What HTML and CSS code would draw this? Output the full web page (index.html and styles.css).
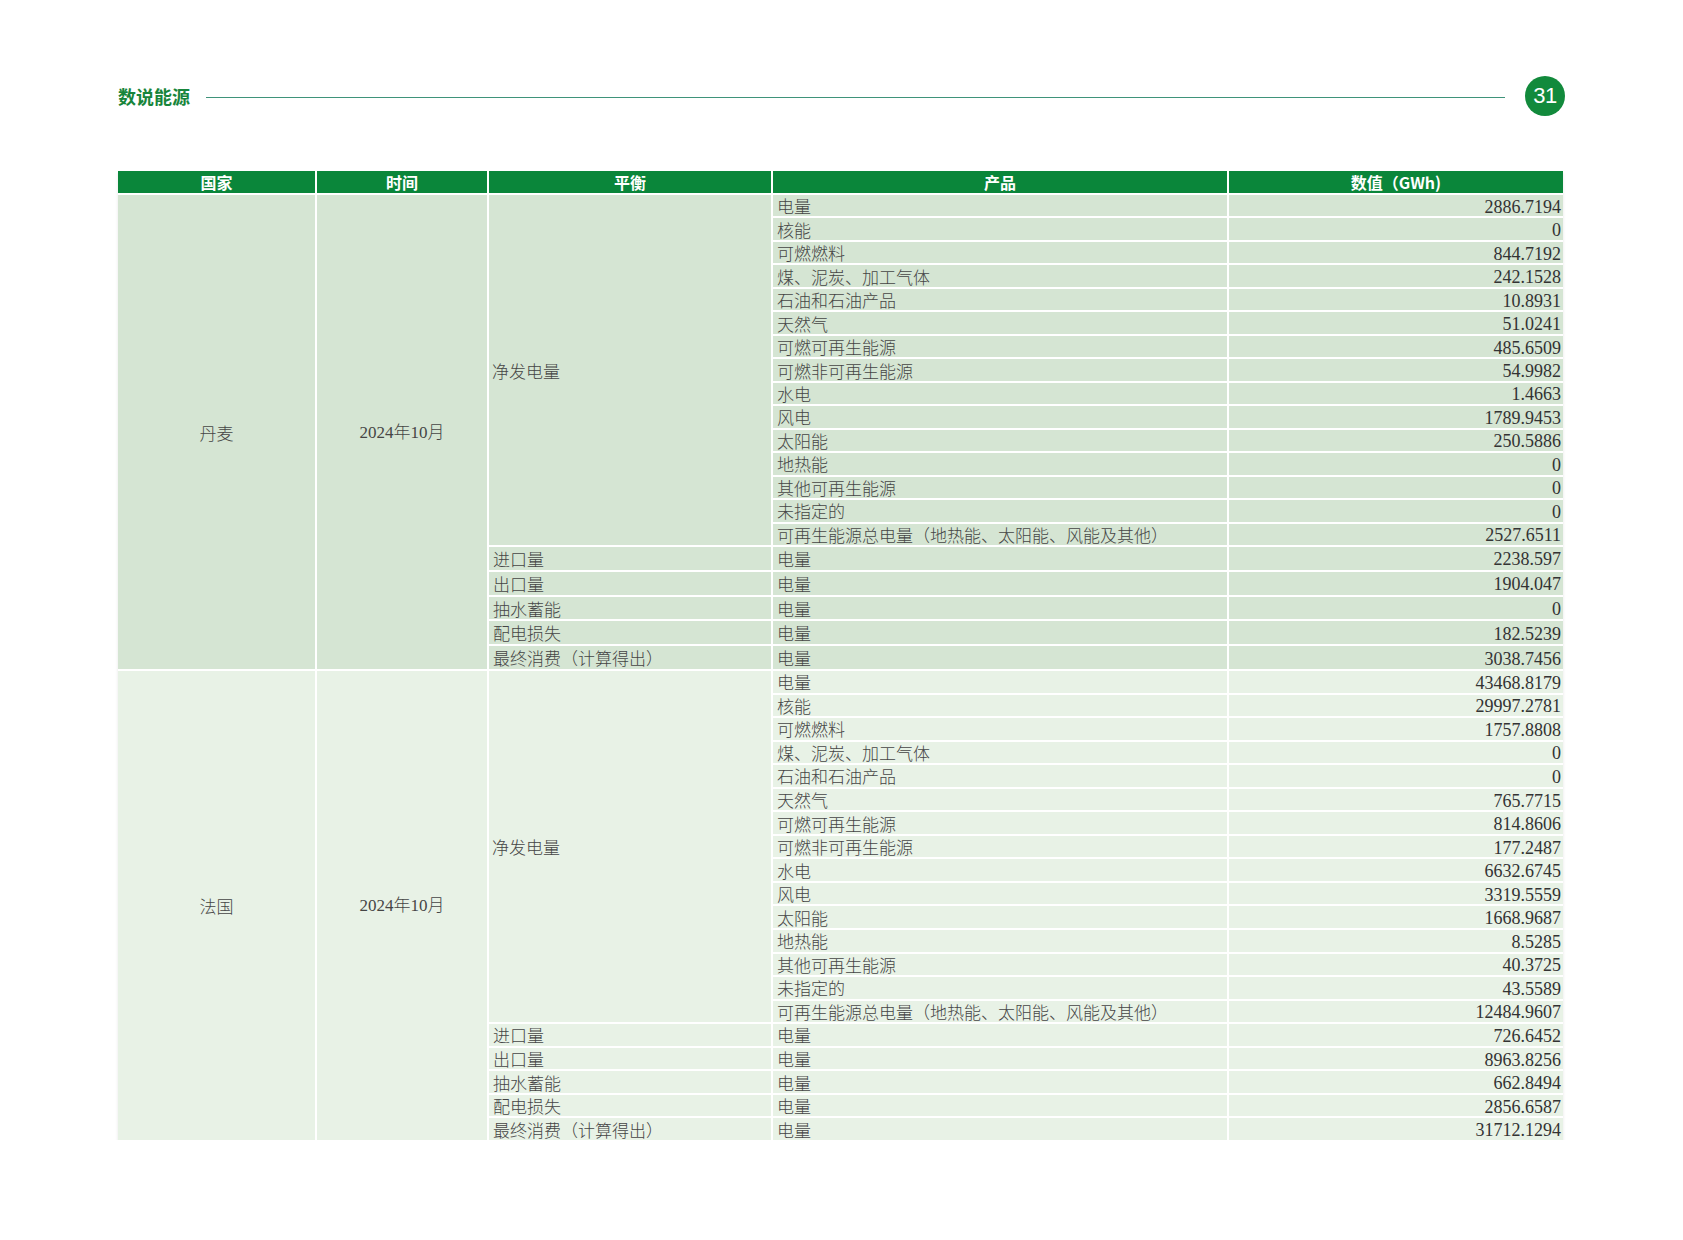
FILE: index.html
```html
<!DOCTYPE html>
<html lang="zh-CN">
<head>
<meta charset="utf-8">
<title>数说能源</title>
<link rel="stylesheet" href="styles.css">
</head>
<body>
<div class="page">
  <div class="top-bar">
    <div class="section-title">数说能源</div>
    <div class="rule"></div>
    <div class="page-num">31</div>
  </div>

  <div class="grid">
    <div class="th">国家</div>
    <div class="th">时间</div>
    <div class="th">平衡</div>
    <div class="th">产品</div>
    <div class="th">数值（GWh)</div>

    <div class="cell dk center span20">丹麦</div>
    <div class="cell dk center span20 num-font">2024年10月</div>
    <div class="cell dk span15">净发电量</div>
    <div class="cell dk">电量</div><div class="cell dk val">2886.7194</div>
    <div class="cell dk">核能</div><div class="cell dk val">0</div>
    <div class="cell dk">可燃燃料</div><div class="cell dk val">844.7192</div>
    <div class="cell dk">煤、泥炭、加工气体</div><div class="cell dk val">242.1528</div>
    <div class="cell dk">石油和石油产品</div><div class="cell dk val">10.8931</div>
    <div class="cell dk">天然气</div><div class="cell dk val">51.0241</div>
    <div class="cell dk">可燃可再生能源</div><div class="cell dk val">485.6509</div>
    <div class="cell dk">可燃非可再生能源</div><div class="cell dk val">54.9982</div>
    <div class="cell dk">水电</div><div class="cell dk val">1.4663</div>
    <div class="cell dk">风电</div><div class="cell dk val">1789.9453</div>
    <div class="cell dk">太阳能</div><div class="cell dk val">250.5886</div>
    <div class="cell dk">地热能</div><div class="cell dk val">0</div>
    <div class="cell dk">其他可再生能源</div><div class="cell dk val">0</div>
    <div class="cell dk">未指定的</div><div class="cell dk val">0</div>
    <div class="cell dk">可再生能源总电量（地热能、太阳能、风能及其他）</div><div class="cell dk val">2527.6511</div>
    <div class="cell dk">进口量</div><div class="cell dk">电量</div><div class="cell dk val">2238.597</div>
    <div class="cell dk">出口量</div><div class="cell dk">电量</div><div class="cell dk val">1904.047</div>
    <div class="cell dk">抽水蓄能</div><div class="cell dk">电量</div><div class="cell dk val">0</div>
    <div class="cell dk">配电损失</div><div class="cell dk">电量</div><div class="cell dk val">182.5239</div>
    <div class="cell dk">最终消费（计算得出）</div><div class="cell dk">电量</div><div class="cell dk val">3038.7456</div>

    <div class="cell fr center span20">法国</div>
    <div class="cell fr center span20 num-font">2024年10月</div>
    <div class="cell fr span15">净发电量</div>
    <div class="cell fr">电量</div><div class="cell fr val">43468.8179</div>
    <div class="cell fr">核能</div><div class="cell fr val">29997.2781</div>
    <div class="cell fr">可燃燃料</div><div class="cell fr val">1757.8808</div>
    <div class="cell fr">煤、泥炭、加工气体</div><div class="cell fr val">0</div>
    <div class="cell fr">石油和石油产品</div><div class="cell fr val">0</div>
    <div class="cell fr">天然气</div><div class="cell fr val">765.7715</div>
    <div class="cell fr">可燃可再生能源</div><div class="cell fr val">814.8606</div>
    <div class="cell fr">可燃非可再生能源</div><div class="cell fr val">177.2487</div>
    <div class="cell fr">水电</div><div class="cell fr val">6632.6745</div>
    <div class="cell fr">风电</div><div class="cell fr val">3319.5559</div>
    <div class="cell fr">太阳能</div><div class="cell fr val">1668.9687</div>
    <div class="cell fr">地热能</div><div class="cell fr val">8.5285</div>
    <div class="cell fr">其他可再生能源</div><div class="cell fr val">40.3725</div>
    <div class="cell fr">未指定的</div><div class="cell fr val">43.5589</div>
    <div class="cell fr">可再生能源总电量（地热能、太阳能、风能及其他）</div><div class="cell fr val">12484.9607</div>
    <div class="cell fr">进口量</div><div class="cell fr">电量</div><div class="cell fr val">726.6452</div>
    <div class="cell fr">出口量</div><div class="cell fr">电量</div><div class="cell fr val">8963.8256</div>
    <div class="cell fr">抽水蓄能</div><div class="cell fr">电量</div><div class="cell fr val">662.8494</div>
    <div class="cell fr">配电损失</div><div class="cell fr">电量</div><div class="cell fr val">2856.6587</div>
    <div class="cell fr">最终消费（计算得出）</div><div class="cell fr">电量</div><div class="cell fr val">31712.1294</div>
  </div>
</div>
</body>
</html>
```

FILE: styles.css
```css
html, body {
  margin: 0;
  padding: 0;
  background: #ffffff;
}

.page {
  padding: 76px 0 0 118px;
  width: 1447px;
  font-family: "Noto Sans CJK SC", sans-serif;
}

.top-bar {
  display: flex;
  align-items: center;
  height: 40px;
  margin-bottom: 55px;
}

.section-title {
  font-size: 18px;
  font-weight: 700;
  color: #17853b;
  line-height: 1;
  margin-top: -1px;
}

.rule {
  flex: 1;
  height: 1px;
  background: #3f937a;
  margin: 3px 20px 0 16px;
}

.page-num {
  width: 40px;
  height: 40px;
  border-radius: 50%;
  background: #128a3c;
  color: #ffffff;
  font-family: "Liberation Sans", Arial, sans-serif;
  font-size: 22px;
  display: flex;
  align-items: center;
  justify-content: center;
  letter-spacing: -0.5px;
}

.grid {
  display: grid;
  width: 1445px;
  grid-template-columns: 197px 170px 282px 454px 334px;
  grid-template-rows: 22px repeat(15, 21.47px) repeat(5, 22.8px) repeat(20, 21.55px);
  column-gap: 2px;
  row-gap: 2px;
  background: #ffffff;
  box-shadow: 0 2px 3px rgba(0, 0, 0, 0.10);
}

.th {
  background: #0a863a;
  color: #ffffff;
  font-weight: 700;
  font-size: 16px;
  display: flex;
  align-items: center;
  justify-content: center;
  line-height: 1;
}

.cell {
  display: flex;
  align-items: center;
  padding: 0 4px;
  font-size: 17px;
  font-weight: 300;
  line-height: 1;
  color: #454545;
  white-space: nowrap;
}

.dk { background: #d5e5d3; }
.fr { background: #e8f2e6; }

.center { justify-content: center; }

.span20 { grid-row: span 20; }
.span15 { grid-row: span 15; padding-left: 3px; }

.num-font {
  font-family: "Liberation Serif", "Noto Sans CJK SC", serif;
  font-size: 17px;
}

.val {
  justify-content: flex-end;
  padding: 2px 2px 0 0;
  font-family: "Liberation Serif", "Times New Roman", serif;
  font-size: 18px;
  font-weight: 400;
  color: #333333;
}
```
